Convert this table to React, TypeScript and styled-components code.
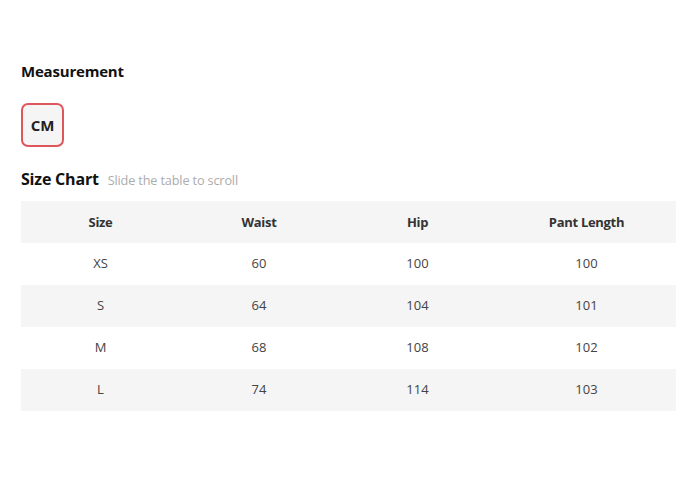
import React from "react";
import styled, { createGlobalStyle } from "styled-components";

const GlobalStyle = createGlobalStyle`
  html, body {
    margin: 0;
    padding: 0;
    background: #fff;
  }
  body {
    font-family: "Open Sans", "Noto Sans", "Liberation Sans", sans-serif;
    color: #222;
  }
`;

const Page = styled.div`
  padding: 59px 15px 0 21px;
`;

const Title = styled.h3<{ $size?: number }>`
  margin: 0;
  font-size: ${(p) => p.$size ?? 15}px;
  font-weight: 700;
  line-height: 24px;
  letter-spacing: -0.2px;
  color: #111;
`;

const UnitRow = styled.div`
  display: flex;
  gap: 10px;
  margin-top: 20px;
`;

const UnitButton = styled.button<{ $active?: boolean }>`
  width: 43px;
  height: 44px;
  padding: 0;
  border: 2px solid ${(p) => (p.$active ? "#e0575b" : "#ddd")};
  border-radius: 7px;
  background: #f5f5f5;
  font-family: inherit;
  font-size: 15px;
  font-weight: 700;
  color: #222;
  cursor: pointer;
`;

const ChartHead = styled.div`
  display: flex;
  align-items: baseline;
  gap: 9px;
  margin-top: 20px;
`;

const Hint = styled.span`
  font-size: 12.7px;
  letter-spacing: -0.15px;
  color: #acacac;
`;

const Table = styled.table`
  width: 655px;
  margin-top: 10px;
  border-collapse: collapse;
  font-size: 13px;
`;

const Row = styled.tr<{ $shade?: boolean }>`
  height: 42px;
  background: ${(p) => (p.$shade ? "#f5f5f5" : "#fff")};
`;

const Th = styled.th<{ $w: number }>`
  width: ${(p) => p.$w}px;
  padding: 0 0 1px;
  font-weight: 700;
  letter-spacing: -0.3px;
  color: #333;
  text-align: center;
`;

const Td = styled.td`
  padding: 0 0 2px;
  color: #444;
  text-align: center;
`;

const columns = [
  { label: "Size", w: 159 },
  { label: "Waist", w: 158 },
  { label: "Hip", w: 159 },
  { label: "Pant Length", w: 179 },
];

const rows = [
  ["XS", "60", "100", "100"],
  ["S", "64", "104", "101"],
  ["M", "68", "108", "102"],
  ["L", "74", "114", "103"],
];

const App = () => {
  return (
    <Page>
      <GlobalStyle />
      <Title>Measurement</Title>
      <UnitRow>
        <UnitButton $active>CM</UnitButton>
      </UnitRow>
      <ChartHead>
        <Title as="span" $size={16}>
          Size Chart
        </Title>
        <Hint>Slide the table to scroll</Hint>
      </ChartHead>
      <Table>
        <thead>
          <Row $shade>
            {columns.map((c) => (
              <Th key={c.label} $w={c.w}>
                {c.label}
              </Th>
            ))}
          </Row>
        </thead>
        <tbody>
          {rows.map((r, i) => (
            <Row key={r[0]} $shade={i % 2 === 1}>
              {r.map((v, j) => (
                <Td key={j}>{v}</Td>
              ))}
            </Row>
          ))}
        </tbody>
      </Table>
    </Page>
  );
};

export default App;
